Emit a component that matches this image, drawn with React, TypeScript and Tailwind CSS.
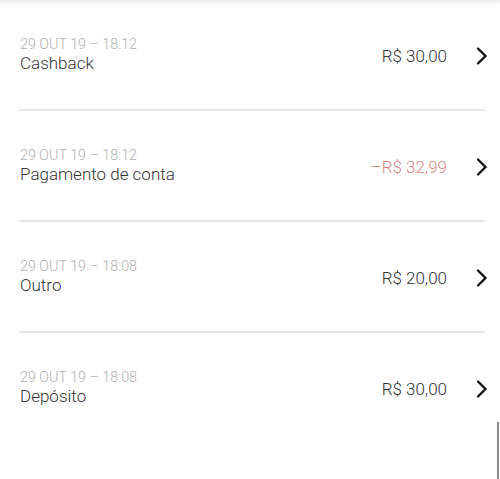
import React from "react";

type Item = { date: string; title: string; amount: string; negative?: boolean };

const items: Item[] = [
  { date: "29 OUT 19 – 18:12", title: "Cashback", amount: "R$ 30,00" },
  { date: "29 OUT 19 – 18:12", title: "Pagamento de conta", amount: "–R$ 32,99", negative: true },
  { date: "29 OUT 19 – 18:08", title: "Outro", amount: "R$ 20,00" },
  { date: "29 OUT 19 – 18:08", title: "Depósito", amount: "R$ 30,00" },
];

function Chevron() {
  return (
    <svg width="14" height="20" viewBox="0 0 14 20" fill="none">
      <path d="M3 2.5 L10.5 10 L3 17.5" stroke="#111" strokeWidth="2.3" strokeLinecap="round" strokeLinejoin="miter" />
    </svg>
  );
}

export default function App() {
  return (
    <div className="relative w-[500px] h-[479px] bg-white overflow-hidden" style={{ fontFamily: "Roboto, 'Noto Sans', sans-serif" }}>
      <div className="absolute top-0 left-0 right-0 h-[5px] bg-gradient-to-b from-[#ececec] to-white" />
      <div className="flex flex-col">
        {items.map((it, i) => (
          <div key={i} className="flex flex-col">
            <div className="flex items-start h-[109px] pl-[20px] pr-[11px] pt-[36px]">
              <div className="flex flex-col flex-1">
                <span className="text-[14.3px] leading-[17px] font-light text-[#b0b0b0]">{it.date}</span>
                <span className="text-[17px] leading-[20px] font-light text-[#333333]">{it.title}</span>
              </div>
              <span className={`text-[17px] leading-[20px] font-light mt-[10px] mr-[28px] ${it.negative ? "text-[#d68686]" : "text-[#333333]"}`}>
                {it.amount}
              </span>
              <div className="mt-[10px]">
                <Chevron />
              </div>
            </div>
            {i < items.length - 1 && <div className="ml-[19px] mr-[15px] h-[2px] bg-[#e6e6e6]" />}
          </div>
        ))}
      </div>
      <div className="absolute right-[1px] top-[422px] bottom-0 w-[2px] bg-[#8a8a8a]" />
    </div>
  );
}
